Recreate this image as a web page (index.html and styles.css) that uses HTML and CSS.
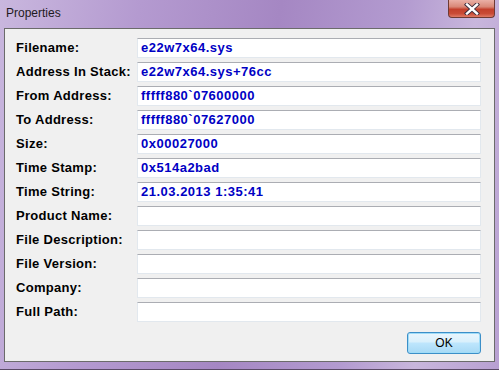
FILE: index.html
```html
<!doctype html>
<html lang="en">
<head>
    <meta charset="UTF-8">
    <title>Properties</title>
    <link rel="stylesheet" href="styles.css">
</head>
<body>
    <div class="window">
        <div class="titlebar">
            <span class="title">Properties</span>
            <div class="close">
                <svg width="20" height="12" viewBox="0 0 20 12">
                    <path d="M5 1.5 L15 10.5 M15 1.5 L5 10.5" stroke="#3a2a3a" stroke-width="4.2" stroke-linecap="square"/>
                    <path d="M5 1.5 L15 10.5 M15 1.5 L5 10.5" stroke="#ffffff" stroke-width="2.4" stroke-linecap="square"/>
                </svg>
            </div>
        </div>
        <div class="client">
            <div class="fields">
                <label>Filename:</label><div class="field">e22w7x64.sys</div>
                <label>Address In Stack:</label><div class="field">e22w7x64.sys+76cc</div>
                <label>From Address:</label><div class="field">fffff880`07600000</div>
                <label>To Address:</label><div class="field">fffff880`07627000</div>
                <label>Size:</label><div class="field">0x00027000</div>
                <label>Time Stamp:</label><div class="field">0x514a2bad</div>
                <label>Time String:</label><div class="field">21.03.2013 1:35:41</div>
                <label>Product Name:</label><div class="field"></div>
                <label>File Description:</label><div class="field"></div>
                <label>File Version:</label><div class="field"></div>
                <label>Company:</label><div class="field"></div>
                <label>Full Path:</label><div class="field"></div>
            </div>
            <div class="buttons">
                <button class="ok">OK</button>
            </div>
        </div>
    </div>
</body>
</html>
```
FILE: styles.css
```css
* {
    margin: 0;
    padding: 0;
    box-sizing: border-box;
}
body {
    overflow: hidden;
    width: 499px;
    height: 370px;
}
.window {
    width: 499px;
    height: 370px;
    display: flex;
    flex-direction: column;
    background: linear-gradient(100deg, #c9b7de 0%, #b49ad0 25%, #a587c3 50%, #b39bd0 72%, #c8b6dc 85%, #b8a0d2 100%);
    border-bottom: 1px solid #5a4a66;
}
.titlebar {
    height: 29px;
    display: flex;
    justify-content: space-between;
    align-items: flex-start;
    padding: 0 4px 0 6px;
}
.title {
    font-family: 'Liberation Sans', Arial, sans-serif;
    font-size: 12px;
    color: #1e1a22;
    margin-top: 6px;
}
.close {
    width: 47px;
    height: 18px;
    border: 1px solid #6e3a34;
    border-top: none;
    border-radius: 0 0 4px 4px;
    background: linear-gradient(#eab0a6 0%, #d98877 40%, #c3402c 55%, #c94b36 80%, #e07a66 100%);
    display: flex;
    justify-content: center;
    align-items: center;
}
.client {
    flex: 1;
    margin: 0 4px 7px 4px;
    background: #f0f0f0;
    border: 1px solid #6b6b6b;
    padding: 9px 13px 7px 11px;
    display: flex;
    flex-direction: column;
}
.fields {
    display: grid;
    grid-template-columns: 121px 1fr;
    grid-auto-rows: 20px;
    row-gap: 4px;
}
.fields label {
    font-family: 'Liberation Sans', Arial, sans-serif;
    font-size: 13px;
    font-weight: bold;
    letter-spacing: 0.3px;
    color: #000;
    line-height: 20px;
}
.field {
    background: #fff;
    border: 1px solid #e2e8ee;
    border-top-color: #abadb3;
    padding-left: 3px;
    font-family: 'Liberation Sans', Arial, sans-serif;
    font-size: 13px;
    font-weight: bold;
    letter-spacing: 0.5px;
    color: #0000c4;
    line-height: 18px;
}
.buttons {
    display: flex;
    justify-content: flex-end;
    margin-top: 10px;
}
.ok {
    width: 74px;
    height: 22px;
    border: 1px solid #3c8fc8;
    border-radius: 3px;
    background: linear-gradient(#eaf6fd 0%, #d9f0fc 45%, #bee6fd 50%, #a7d9f5 100%);
    box-shadow: inset 0 0 0 1px #9fdcf8;
    font-family: 'Liberation Sans', Arial, sans-serif;
    font-size: 12px;
    color: #000;
}
```
